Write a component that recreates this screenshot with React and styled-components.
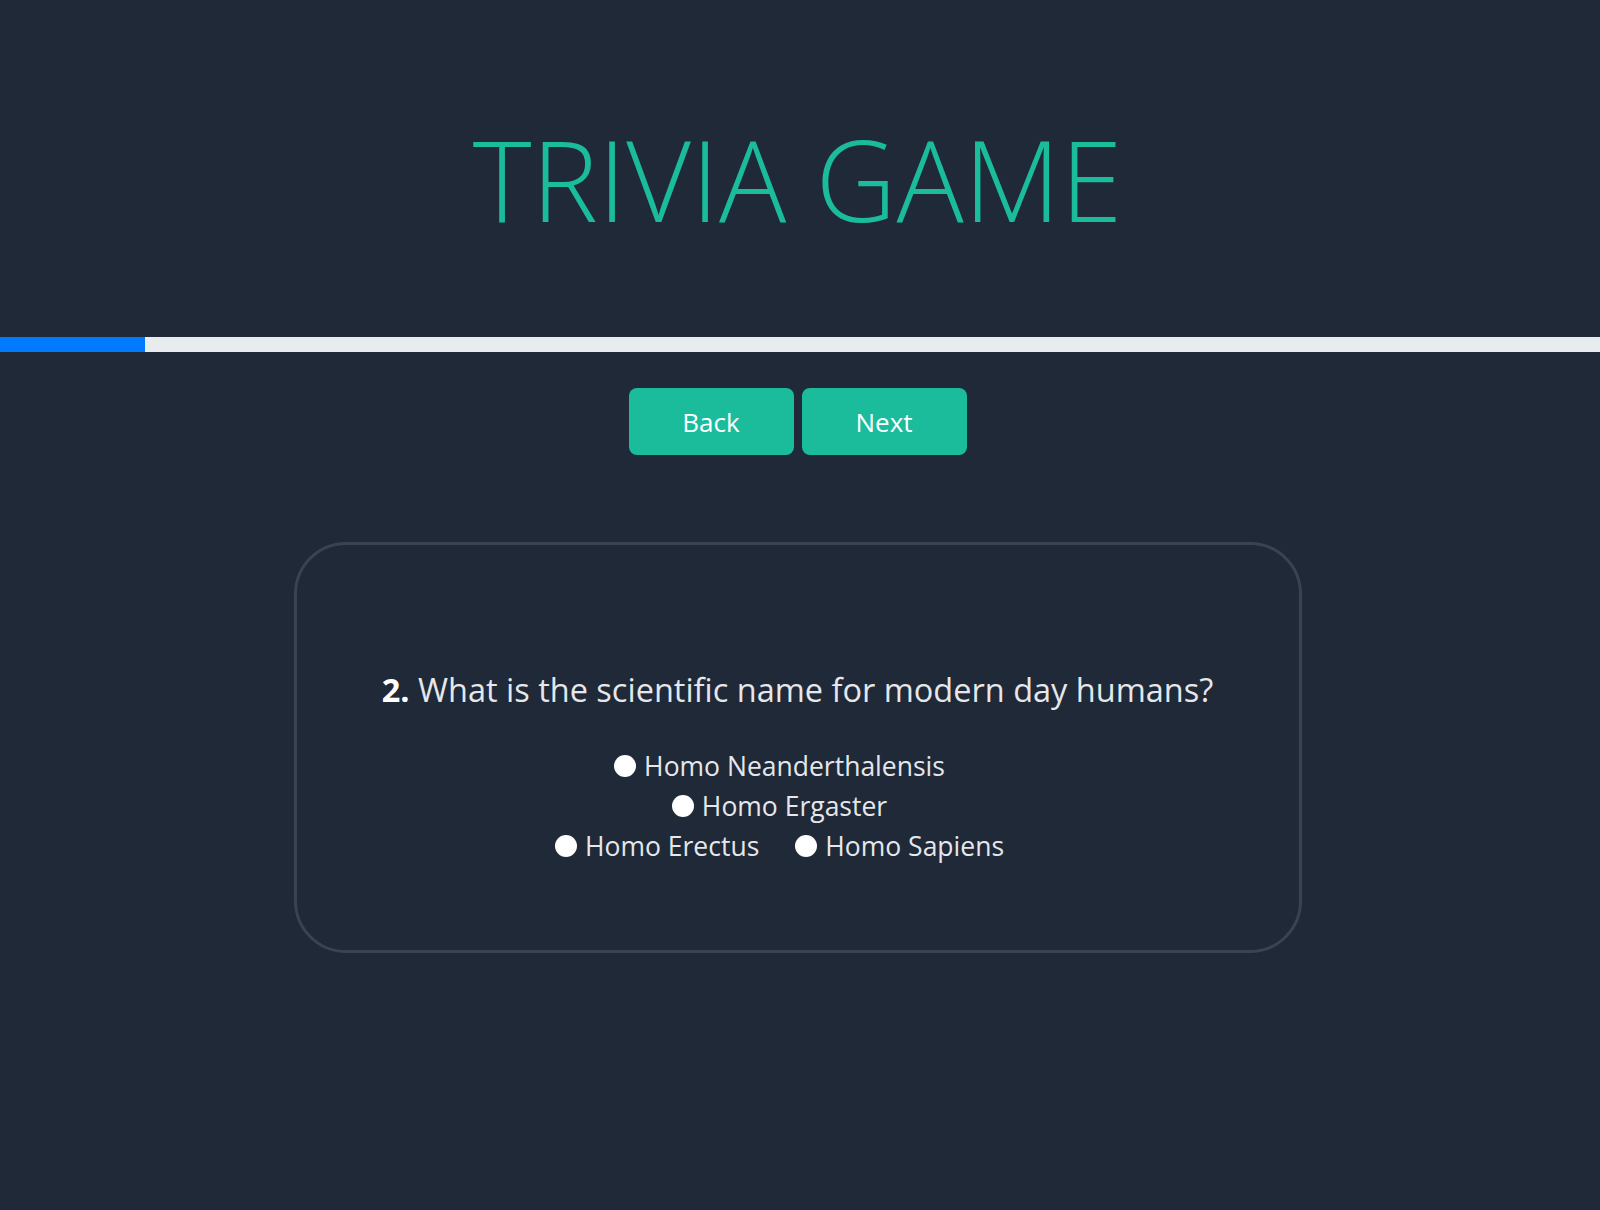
import React, { useState } from 'react';
import styled, { createGlobalStyle } from 'styled-components';

const GlobalStyle = createGlobalStyle`
  html, body {
    margin: 0;
    padding: 0;
    background: #1f2937;
  }
  body {
    font-family: "Open Sans", "Noto Sans", sans-serif;
    min-height: 1210px;
  }
`;

const Page = styled.div`
  min-height: 1210px;
  background: #1f2937;
  color: #e5e7eb;
  display: flex;
  flex-direction: column;
  align-items: center;
`;

const Title = styled.h1`
  margin: 123px 5px 102px 0;
  font-size: 112px;
  font-weight: 300;
  line-height: 1;
  color: #1abc9c;
`;

const Progress = styled.div`
  width: 100%;
  height: 15px;
  background: #e9ecef;
  display: flex;
`;

const ProgressBar = styled.div`
  height: 100%;
  background: #007bff;
`;

const Controls = styled.div`
  display: flex;
  gap: 8px;
  margin: 36px 5px 0 0;
`;

const Button = styled.button`
  width: 165px;
  height: 67px;
  border: none;
  border-radius: 8px;
  background: #1abc9c;
  color: #fff;
  font-family: "Open Sans", "Noto Sans", sans-serif;
  font-size: 26px;
  cursor: pointer;
`;

const Card = styled.div`
  box-sizing: border-box;
  width: 1008px;
  height: 411px;
  margin: 87px 5px 0 0;
  padding-top: 121px;
  border: 3px solid #3a4351;
  border-radius: 52px;
  display: flex;
  flex-direction: column;
  align-items: center;
`;

const Question = styled.p`
  margin: 0 0 31px;
  font-size: 32.5px;
  line-height: 1.5;
  color: #e5e7eb;

  b {
    color: #fff;
    font-weight: 700;
  }
`;

const OptionRow = styled.div`
  display: flex;
  justify-content: center;
  height: 40px;
  align-items: center;
`;

const Option = styled.label`
  display: inline-flex;
  align-items: center;
  gap: 8px;
  margin-right: 36px;
  font-size: 26.5px;
  color: #e5e7eb;
  cursor: pointer;
`;

const Radio = styled.input`
  appearance: none;
  width: 22px;
  height: 22px;
  margin: 0;
  border-radius: 50%;
  background: #fff;
  border: none;
  cursor: pointer;

  &:checked {
    box-shadow: inset 0 0 0 6px #007bff;
  }
`;

const rows = [
  ['Homo Neanderthalensis'],
  ['Homo Ergaster'],
  ['Homo Erectus', 'Homo Sapiens'],
];

export default function App() {
  const [answer, setAnswer] = useState(null);
  const total = 11;
  const current = 1;

  return (
    <Page>
      <GlobalStyle />
      <Title>TRIVIA GAME</Title>
      <Progress>
        <ProgressBar style={{ width: `${(current / total) * 100}%` }} />
      </Progress>
      <Controls>
        <Button>Back</Button>
        <Button>Next</Button>
      </Controls>
      <Card>
        <Question>
          <b>2.</b> What is the scientific name for modern day humans?
        </Question>
        {rows.map((row, i) => (
          <OptionRow key={i}>
            {row.map((opt) => (
              <Option key={opt}>
                <Radio
                  type="radio"
                  name="answer"
                  checked={answer === opt}
                  onChange={() => setAnswer(opt)}
                />
                {opt}
              </Option>
            ))}
          </OptionRow>
        ))}
      </Card>
    </Page>
  );
}
